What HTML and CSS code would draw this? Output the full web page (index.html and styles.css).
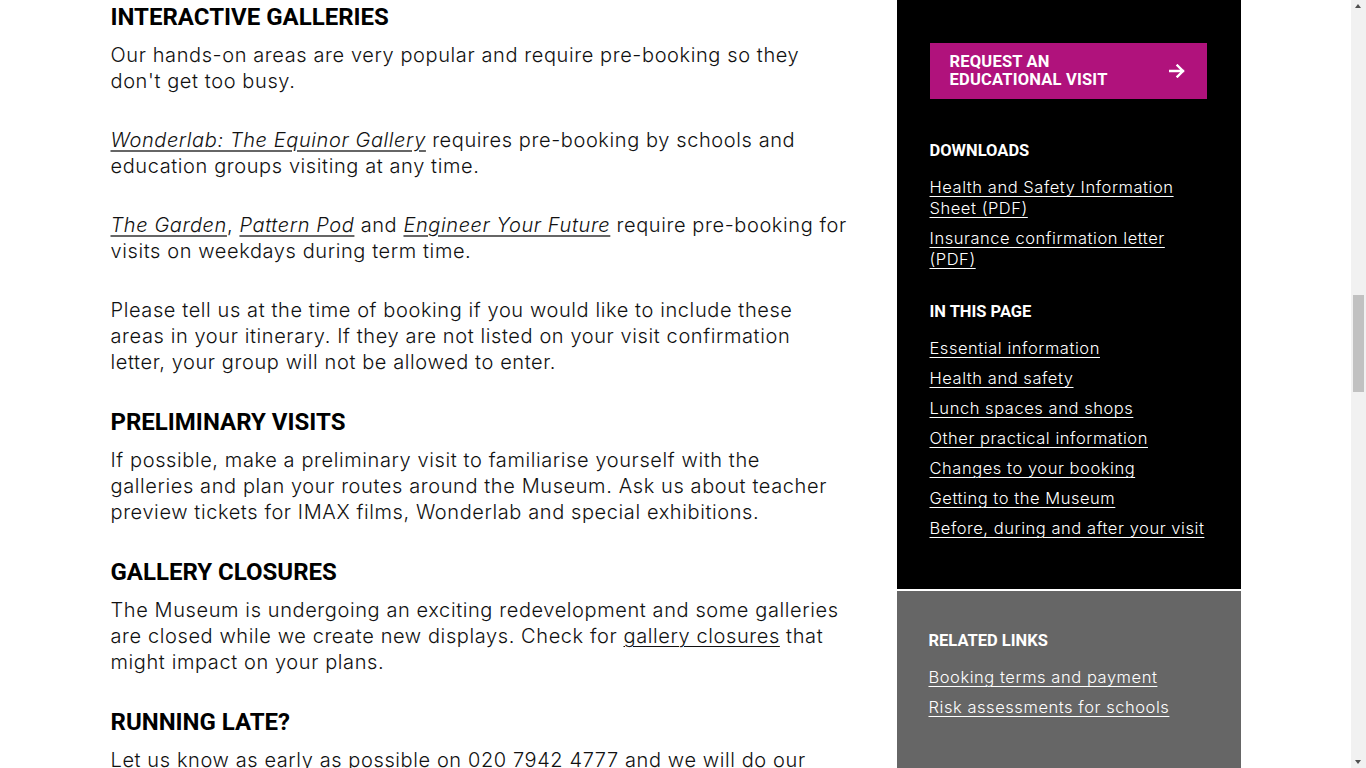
FILE: index.html
```html
<!DOCTYPE html>
<html lang="en">
<head>
<meta charset="utf-8">
<title>Planning your school visit</title>
<link rel="stylesheet" href="styles.css">
</head>
<body>
<div class="page">
  <main class="content">
    <h2 class="heading">Interactive galleries</h2>
    <p>Our hands-on areas are very popular and require pre-booking so they don't get too busy.</p>
    <p><a class="gallery" href="#">Wonderlab: The Equinor Gallery</a> requires pre-booking by schools and education groups visiting at any time.</p>
    <p><a class="gallery" href="#">The Garden</a>, <a class="gallery" href="#">Pattern Pod</a> and <a class="gallery" href="#">Engineer Your Future</a> require pre-booking for visits on weekdays during term time.</p>
    <p>Please tell us at the time of booking if you would like to include these areas in your itinerary. If they are not listed on your visit confirmation letter, your group will not be allowed to enter.</p>

    <h2 class="heading">Preliminary visits</h2>
    <p>If possible, make a preliminary visit to familiarise yourself with the galleries and plan your routes around the Museum. Ask us about teacher preview tickets for IMAX films, Wonderlab and special exhibitions.</p>

    <h2 class="heading">Gallery closures</h2>
    <p>The Museum is undergoing an exciting redevelopment and some galleries are closed while we create new displays. Check for <a href="#">gallery closures</a> that might impact on your plans.</p>

    <h2 class="heading">Running late?</h2>
    <p>Let us know as early as possible on 020 7942 4777 and we will do our best to accommodate you. Please note that if you arrive late we may not be able to honour your booked sessions.</p>
  </main>

  <aside class="sidebar">
    <div class="panel panel-dark">
      <a class="cta" href="#">
        <span class="cta-text">Request an<br>educational visit</span>
        <svg class="cta-arrow" width="16" height="14" viewBox="0 0 16 14" aria-hidden="true">
          <path d="M1 7h13M8.5 1.5L14 7l-5.5 5.5" fill="none" stroke="#fff" stroke-width="2.4" stroke-linecap="square"/>
        </svg>
      </a>

      <section class="side-section">
        <h3 class="side-title">Downloads</h3>
        <ul class="side-links">
          <li><a href="#">Health and Safety Information Sheet (PDF)</a></li>
          <li><a href="#">Insurance confirmation letter (PDF)</a></li>
        </ul>
      </section>

      <section class="side-section">
        <h3 class="side-title">In this page</h3>
        <ul class="side-links">
          <li><a href="#">Essential information</a></li>
          <li><a href="#">Health and safety</a></li>
          <li><a href="#">Lunch spaces and shops</a></li>
          <li><a href="#">Other practical information</a></li>
          <li><a href="#">Changes to your booking</a></li>
          <li><a href="#">Getting to the Museum</a></li>
          <li><a href="#">Before, during and after your visit</a></li>
        </ul>
      </section>
    </div>

    <div class="panel panel-grey">
      <section class="side-section">
        <h3 class="side-title">Related links</h3>
        <ul class="side-links">
          <li><a href="#">Booking terms and payment</a></li>
          <li><a href="#">Risk assessments for schools</a></li>
        </ul>
      </section>
    </div>
  </aside>
</div>

<div class="scrollbar" aria-hidden="true">
  <span class="scroll-arrow scroll-up"></span>
  <span class="scroll-thumb"></span>
  <span class="scroll-arrow scroll-down"></span>
</div>
</body>
</html>
```

FILE: styles.css
```css
* { box-sizing: border-box; }

html, body {
  margin: 0;
  padding: 0;
  background: #fff;
}

body {
  font-family: Inter, "Open Sans", "Liberation Sans", sans-serif;
  font-weight: 300;
  color: #111;
  padding-right: 15px;
}

.page {
  width: 1130px;
  margin: 0 auto;
  display: grid;
  grid-template-columns: 786px 344px;
  align-items: start;
}

.content {
  padding: 3px 49px 40px 0;
}

.heading {
  font-family: Roboto, "Liberation Sans", sans-serif;
  font-weight: 700;
  font-size: 24px;
  line-height: 28px;
  text-transform: uppercase;
  margin: 0 0 11px;
  color: #000;
}

.content p {
  font-size: 20px;
  line-height: 26px;
  margin: 0 0 33px;
  letter-spacing: 0.6px;
}

.content a {
  color: #111;
  text-decoration: underline;
  text-decoration-thickness: 1px;
  text-underline-offset: 3px;
}

.content a.gallery {
  font-style: italic;
  text-decoration-color: #666;
  text-decoration-thickness: 2px;
}

.sidebar {
  display: flex;
  flex-direction: column;
  gap: 2px;
}

.panel {
  padding: 43px 34px 50px 33px;
  color: #fff;
}

.panel-dark { background: #000; }

.panel-grey {
  background: #666;
  padding: 40px 34px 60px 32px;
  min-height: 200px;
}

.cta {
  display: flex;
  align-items: center;
  justify-content: space-between;
  background: #b0127c;
  color: #fff;
  text-decoration: none;
  height: 56px;
  padding: 0 22px 0 20px;
  margin-bottom: 42px;
}

.cta-text {
  font-family: Roboto, "Liberation Sans", sans-serif;
  font-weight: 700;
  font-size: 16.5px;
  line-height: 18px;
  text-transform: uppercase;
  letter-spacing: 0.2px;
}

.cta-arrow { display: block; }

.side-section + .side-section { margin-top: 32px; }

.side-title {
  font-family: Roboto, "Liberation Sans", sans-serif;
  font-weight: 700;
  font-size: 16.5px;
  line-height: 20px;
  text-transform: uppercase;
  margin: 0 0 16px;
}

.side-links {
  list-style: none;
  margin: 0;
  padding: 0;
  display: flex;
  flex-direction: column;
  gap: 9px;
}

.side-links a {
  color: #fff;
  font-size: 16.5px;
  line-height: 21px;
  letter-spacing: 0.55px;
  text-decoration: underline;
  text-decoration-thickness: 1px;
  text-underline-offset: 3px;
}

/* emulated browser scrollbar */
.scrollbar {
  position: fixed;
  top: 0;
  right: 0;
  width: 15px;
  height: 100vh;
  background: #f1f1f1;
}

.scroll-thumb {
  position: absolute;
  left: 2px;
  right: 2px;
  top: 295px;
  height: 97px;
  background: #c1c1c1;
}

.scroll-arrow {
  position: absolute;
  left: 4px;
  width: 0;
  height: 0;
  border-left: 3.5px solid transparent;
  border-right: 3.5px solid transparent;
}

.scroll-up {
  top: 4px;
  border-bottom: 4px solid #505050;
}

.scroll-down {
  bottom: 4px;
  border-top: 4px solid #505050;
}
```
